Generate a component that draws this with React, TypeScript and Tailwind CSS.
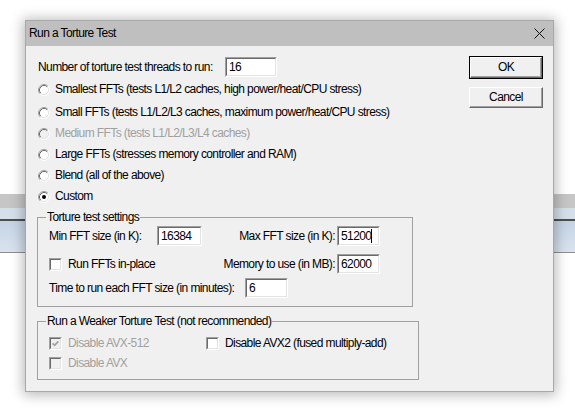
import React from "react";

function Radio({ checked = false, disabled = false }: { checked?: boolean; disabled?: boolean }) {
  return (
    <svg width="12" height="12" viewBox="0 0 12 12" className="shrink-0">
      <circle cx="6" cy="6" r="4.2" fill={disabled ? "#f0f0f0" : "#ffffff"} />
      <path d="M2.11 9.89A5.5 5.5 0 0 1 9.89 2.11" fill="none" stroke="#a0a0a0" />
      <path d="M2.82 9.18A4.5 4.5 0 0 1 9.18 2.82" fill="none" stroke="#696969" />
      <path d="M9.89 2.11A5.5 5.5 0 0 1 2.11 9.89" fill="none" stroke="#ffffff" />
      <path d="M9.18 2.82A4.5 4.5 0 0 1 2.82 9.18" fill="none" stroke="#e3e3e3" />
      {checked && <circle cx="6" cy="6" r="2" fill="#000000" />}
    </svg>
  );
}

function Check({ checked = false, disabled = false }: { checked?: boolean; disabled?: boolean }) {
  return (
    <span className="flex h-[13px] w-[13px] shrink-0 border border-t-[#a0a0a0] border-l-[#a0a0a0] border-r-white border-b-white">
      <span
        className={`flex h-full w-full items-center justify-center border border-t-[#696969] border-l-[#696969] border-r-[#e3e3e3] border-b-[#e3e3e3] ${
          disabled ? "bg-[#f0f0f0]" : "bg-white"
        }`}
      >
        {checked && (
          <svg width="7" height="7" viewBox="0 0 7 7">
            <path d="M0.6 3.4L2.6 5.4L6.4 1.4" fill="none" stroke={disabled ? "#a0a0a0" : "#000"} strokeWidth="1.7" />
          </svg>
        )}
      </span>
    </span>
  );
}

function Field({ value, className, caret = false }: { value: string; className: string; caret?: boolean }) {
  return (
    <div className={`h-[20px] shrink-0 border border-t-[#a0a0a0] border-l-[#a0a0a0] border-r-white border-b-white bg-white ${className}`}>
      <div className="flex h-full w-full items-center border border-t-[#696969] border-l-[#696969] border-r-[#e3e3e3] border-b-[#e3e3e3] pl-[2px]">
        <span>{value}</span>
        {caret && <span className="h-[14px] w-px bg-black" />}
      </div>
    </div>
  );
}

const radios = [
  { label: "Smallest FFTs (tests L1/L2 caches, high power/heat/CPU stress)" },
  { label: "Small FFTs (tests L1/L2/L3 caches, maximum power/heat/CPU stress)" },
  { label: "Medium FFTs (tests L1/L2/L3/L4 caches)", disabled: true },
  { label: "Large FFTs (stresses memory controller and RAM)" },
  { label: "Blend (all of the above)" },
  { label: "Custom", checked: true },
];

export default function App() {
  return (
    <div className="relative h-[419px] w-[575px] overflow-hidden whitespace-nowrap bg-white font-['Liberation_Sans',Arial,sans-serif] text-[12px] leading-[15px] tracking-[-0.6px] text-black">
      {/* window behind the dialog */}
      <div className="h-[194px]" />
      <div className="h-[14px] bg-[#c6c6c6]" />
      <div className="h-[11px] bg-[#d5dfea]" />
      <div className="h-[2px] bg-[#4e4e4e]" />
      <div className="h-[31px] bg-gradient-to-b from-[#c4d4e5] to-[#d9e3ee]" />
      <div className="h-px bg-[#8f8f8f]" />

      {/* dialog */}
      <div className="absolute left-[25px] top-[20px] flex h-[372px] w-[529px] flex-col border border-[#a8a8a8] bg-[#f0f0f0] shadow-[0_1px_12px_2px_rgba(0,0,0,0.28)]">
        <div className="flex h-[25px] shrink-0 items-center justify-between bg-[#bfbfbf] pl-[3px] pr-[8px]">
          <span>Run a Torture Test</span>
          <svg width="11" height="11" viewBox="0 0 11 11">
            <path d="M0.5 0.5L10.5 10.5M10.5 0.5L0.5 10.5" stroke="#111" strokeWidth="1" />
          </svg>
        </div>

        <div className="flex">
          <div className="w-[387px] pl-[11px] pt-[11px]">
            <div className="flex h-[20px] items-center">
              <span className="w-[188px] pl-[1px]">Number of torture test threads to run:</span>
              <Field value="16" className="w-[52px]" />
            </div>

            <div className="mt-[2px] flex flex-col">
              {radios.map((r, i) => (
                <div
                  key={r.label}
                  className={`flex h-[21px] items-center gap-[5px] pl-[1px] ${i === 1 ? "mt-[2px]" : ""} ${
                    r.disabled ? "text-[#a0a0a0]" : ""
                  }`}
                >
                  <Radio checked={r.checked} disabled={r.disabled} />
                  <span>{r.label}</span>
                </div>
              ))}
            </div>

            <fieldset className="mt-[3px] border border-[#a0a0a0] pb-[8px] pl-[8px] pr-[32px] pt-[1px]">
              <legend className="px-[1px] leading-[15px]">Torture test settings</legend>
              <div className="ml-[3px]">
                <div className="flex h-[20px] items-center">
                  <span className="w-[108px]">Min FFT size (in K):</span>
                  <Field value="16384" className="w-[45px]" />
                  <span className="flex-1 pr-[2px] text-right">Max FFT size (in K):</span>
                  <Field value="51200" className="w-[43px]" caret />
                </div>
                <div className="mt-[8px] flex h-[20px] items-center">
                  <Check />
                  <span className="ml-[6px]">Run FFTs in-place</span>
                  <span className="flex-1 pr-[2px] text-right">Memory to use (in MB):</span>
                  <Field value="62000" className="w-[43px]" />
                </div>
                <div className="mt-[4px] flex h-[20px] items-center">
                  <span className="w-[196px]">Time to run each FFT size (in minutes):</span>
                  <Field value="6" className="w-[43px]" />
                </div>
              </div>
            </fieldset>

            <fieldset className="mt-[7px] border border-[#a0a0a0] pb-[6px] pl-[8px] pr-[32px] pt-[4px]">
              <legend className="px-[1px] leading-[15px]">Run a Weaker Torture Test (not recommended)</legend>
              <div className="ml-[3px]">
                <div className="flex h-[20px] items-center">
                  <div className="flex w-[157px] items-center text-[#a0a0a0]">
                    <Check checked disabled />
                    <span className="ml-[6px]">Disable AVX-512</span>
                  </div>
                  <Check />
                  <span className="ml-[6px]">Disable AVX2 (fused multiply-add)</span>
                </div>
                <div className="flex h-[20px] items-center text-[#a0a0a0]">
                  <Check disabled />
                  <span className="ml-[6px]">Disable AVX</span>
                </div>
              </div>
            </fieldset>
          </div>

          <div className="ml-[56px] flex flex-col pt-[10px]">
            <div className="h-[23px] w-[74px] border border-black">
              <div className="flex h-full w-full items-center justify-center border border-t-white border-l-white border-r-[#696969] border-b-[#696969] shadow-[inset_-1px_-1px_0_#a0a0a0]">
                OK
              </div>
            </div>
            <div className="mt-[8px] flex h-[21px] w-[74px] items-center justify-center border border-t-white border-l-white border-r-[#696969] border-b-[#696969] shadow-[inset_-1px_-1px_0_#a0a0a0]">
              Cancel
            </div>
          </div>
        </div>
      </div>
    </div>
  );
}
